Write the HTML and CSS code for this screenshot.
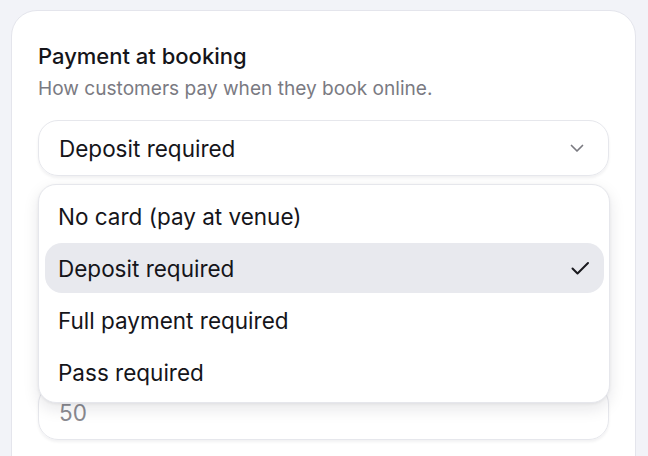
FILE: index.html
```html
<!DOCTYPE html>
<html lang="en">
<head>
<meta charset="utf-8">
<link rel="stylesheet" href="styles.css">
</head>
<body>
<div class="card">
  <div class="title">Payment at booking</div>
  <div class="hint">How customers pay when they book online.</div>
  <div class="select-wrap">
    <div class="select">
      <span>Deposit required</span>
      <svg class="chev" width="16" height="16" viewBox="0 0 16 16"><path d="M2.5 5.5l5.5 5.5 5.5-5.5" fill="none" stroke="#7a7a80" stroke-width="1.7" stroke-linecap="round" stroke-linejoin="round"/></svg>
    </div>
    <div class="menu">
      <div class="item">No card (pay at venue)</div>
      <div class="item active">Deposit required
        <svg class="check" width="22" height="22" viewBox="0 0 22 22"><path d="M3.5 11.5l5 5L19 6" fill="none" stroke="#1a1a1f" stroke-width="2" stroke-linecap="round" stroke-linejoin="round"/></svg>
      </div>
      <div class="item">Full payment required</div>
      <div class="item">Pass required</div>
    </div>
  </div>
  <div class="field-gap"></div>
  <div class="input">50</div>
</div>
</body>
</html>
```
FILE: styles.css
```css
html, body {
  margin: 0;
  padding: 0;
}
body {
  background: #f2f3f8;
  font-family: Inter, "Noto Sans", sans-serif;
  padding: 10px 12px 0 11px;
  height: 456px;
  box-sizing: border-box;
  overflow: hidden;
}
.card {
  background: #ffffff;
  border: 1px solid #e4e5ec;
  border-radius: 26px;
  padding: 31px 26px 40px 26px;
  height: 600px;
  box-sizing: border-box;
}
.title {
  font-size: 22px;
  line-height: 28px;
  font-weight: 500;
  color: #15151a;
}
.hint {
  font-size: 19.1px;
  line-height: 24px;
  color: #7a7a82;
  margin-top: 6px;
}
.select-wrap {
  position: relative;
  margin-top: 20px;
}
.select {
  height: 56px;
  box-sizing: border-box;
  border: 1px solid #e6e7ec;
  border-radius: 20px;
  box-shadow: 0 2px 3px rgba(20, 20, 40, 0.06);
  display: flex;
  align-items: center;
  justify-content: space-between;
  padding: 0 23px 0 20px;
  font-size: 22.5px;
  color: #15151a;
}
.chev {
  display: block;
}
.menu {
  position: absolute;
  top: 64px;
  left: 0;
  right: -1px;
  background: #ffffff;
  border: 1px solid #e6e7ec;
  border-radius: 18px;
  box-shadow: 0 6px 16px rgba(20, 20, 40, 0.10), 0 1px 3px rgba(20, 20, 40, 0.06);
  padding: 6px 5px 5px 6px;
  display: flex;
  flex-direction: column;
  gap: 2px;
  z-index: 2;
}
.item {
  height: 50px;
  display: flex;
  align-items: center;
  justify-content: space-between;
  padding: 0 13px 0 13px;
  border-radius: 17px;
  font-size: 22.5px;
  color: #15151a;
}
.item.active {
  background: #e8e9ee;
}
.check {
  display: block;
}
.field-gap {
  height: 208px;
}
.input {
  height: 56px;
  box-sizing: border-box;
  border: 1px solid #e6e7ec;
  border-radius: 20px;
  box-shadow: 0 2px 3px rgba(20, 20, 40, 0.06);
  display: flex;
  align-items: center;
  padding: 0 20px;
  font-size: 22.5px;
  color: #8a8a90;
}
```
